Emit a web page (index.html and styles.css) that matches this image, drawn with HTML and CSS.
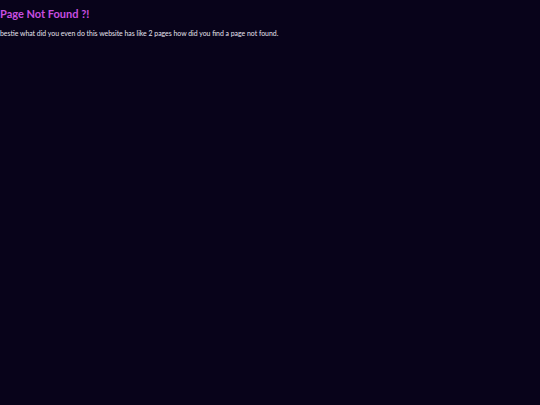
FILE: index.html
```html
<!DOCTYPE html>
<html>
<head>
<meta charset="utf-8">
<link rel="stylesheet" href="styles.css">
</head>
<body>
<main class="page">
<h1 class="title">Page Not Found ?!</h1>
<p class="msg">bestie what did you even do this website has like 2 pages how did you find a page not found.</p>
</main>
</body>
</html>
```
FILE: styles.css
```css
html, body {
  margin: 0;
  padding: 0;
  background: #08031a;
  height: 100%;
}
.page {
  font-family: "Lato", "Noto Sans", sans-serif;
  padding: 0;
}
.title {
  margin: 0;
  padding-top: 7px;
  font-size: 11px;
  font-weight: 700;
  color: #c94ee0;
  line-height: 14px;
}
.msg {
  margin: 0;
  margin-top: 8px;
  font-size: 6.9px;
  font-weight: 400;
  color: #e6e2ee;
  line-height: 8px;
}
```
